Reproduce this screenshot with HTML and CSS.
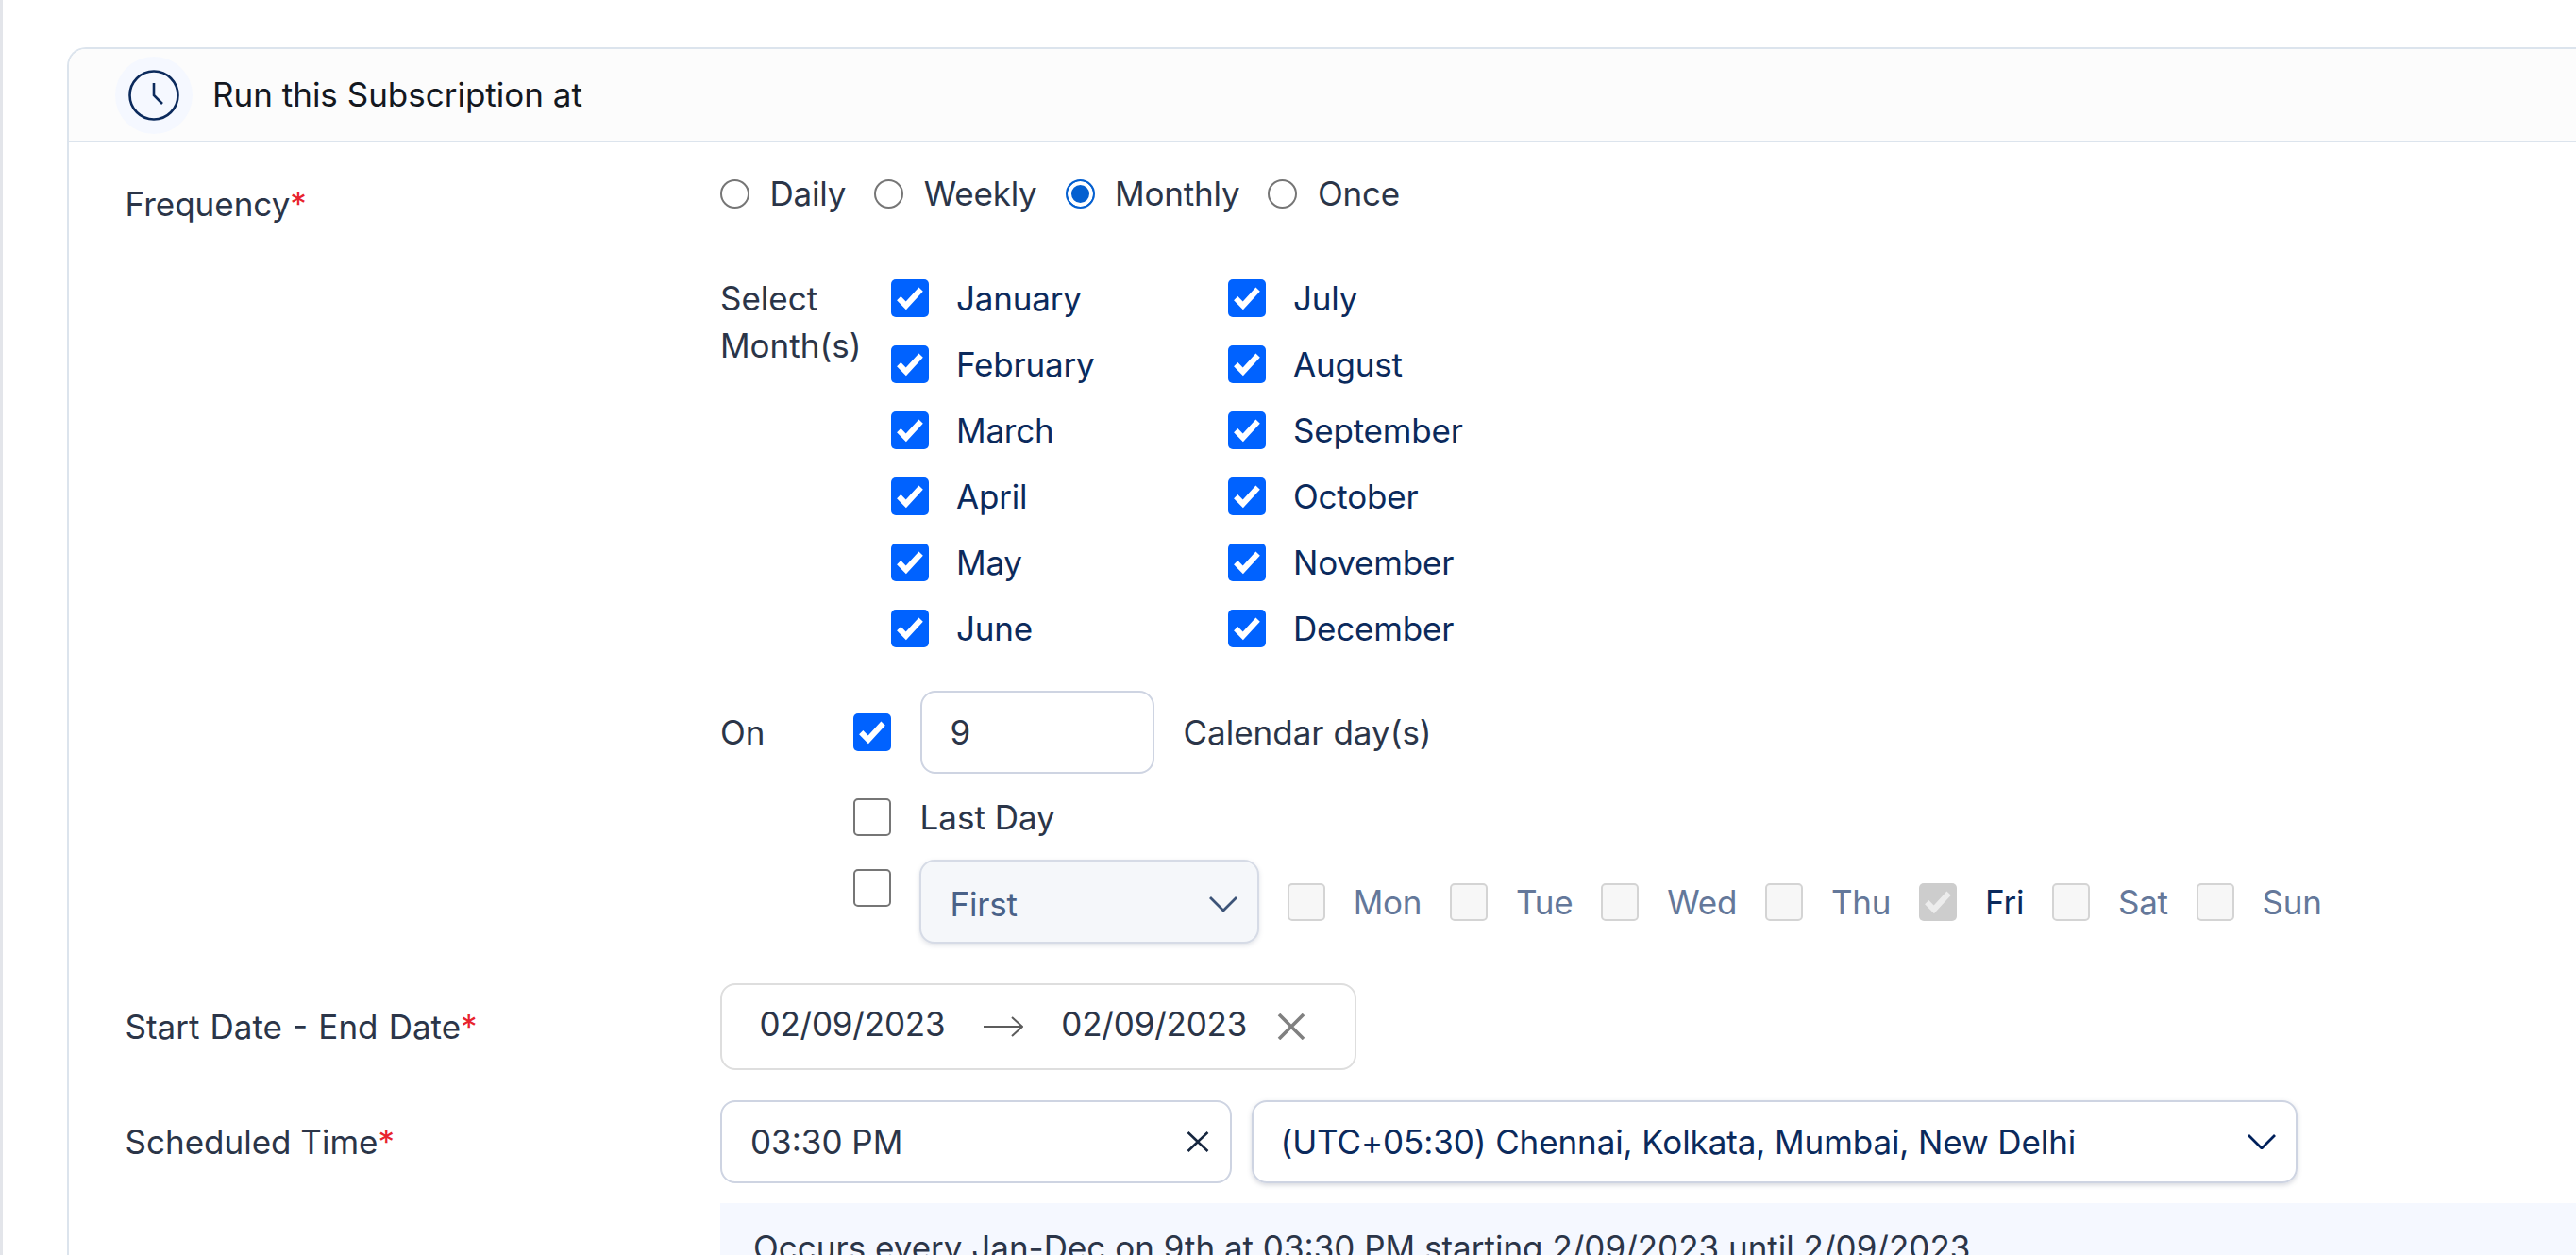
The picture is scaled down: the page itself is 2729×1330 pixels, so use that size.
FILE: index.html
```html
<!DOCTYPE html>
<html lang="en">
<head>
<meta charset="utf-8">
<title>Run this Subscription at</title>
<link rel="stylesheet" href="styles.css">
</head>
<body>
<svg class="defs" width="0" height="0" aria-hidden="true">
  <symbol id="tick" viewBox="0 0 40 40"><path d="M8.2 20.2 15.8 27.8 31.6 10.6" fill="none" stroke="currentColor" stroke-width="6"/></symbol>
</svg>
<main class="page">
  <section class="card">
    <header class="card-head">
      <span class="clock-badge">
        <svg class="clock" viewBox="0 0 54 54"><circle cx="27" cy="27" r="25.5" fill="none" stroke="#0b2a5c" stroke-width="2.6"/><path d="M27 14V27L36 36" fill="none" stroke="#0b2a5c" stroke-width="2.6"/></svg>
      </span>
      <h2 class="card-title">Run this Subscription at</h2>
    </header>
    <div class="card-body">
      <div class="form-row">
        <div class="label label-freq">Frequency<span class="req">*</span></div>
        <div class="field">
          <div class="radios">
            <label class="radio-item"><span class="radio"></span>Daily</label>
            <label class="radio-item"><span class="radio"></span>Weekly</label>
            <label class="radio-item"><span class="radio on"></span>Monthly</label>
            <label class="radio-item"><span class="radio"></span>Once</label>
          </div>
          <div class="months-block">
            <div class="months-label">Select Month(s)</div>
            <div class="months">
              <label class="month"><span class="check on"><svg><use href="#tick"/></svg></span>January</label>
              <label class="month"><span class="check on"><svg><use href="#tick"/></svg></span>July</label>
              <label class="month"><span class="check on"><svg><use href="#tick"/></svg></span>February</label>
              <label class="month"><span class="check on"><svg><use href="#tick"/></svg></span>August</label>
              <label class="month"><span class="check on"><svg><use href="#tick"/></svg></span>March</label>
              <label class="month"><span class="check on"><svg><use href="#tick"/></svg></span>September</label>
              <label class="month"><span class="check on"><svg><use href="#tick"/></svg></span>April</label>
              <label class="month"><span class="check on"><svg><use href="#tick"/></svg></span>October</label>
              <label class="month"><span class="check on"><svg><use href="#tick"/></svg></span>May</label>
              <label class="month"><span class="check on"><svg><use href="#tick"/></svg></span>November</label>
              <label class="month"><span class="check on"><svg><use href="#tick"/></svg></span>June</label>
              <label class="month"><span class="check on"><svg><use href="#tick"/></svg></span>December</label>
            </div>
          </div>
          <div class="on-row">
            <span class="on-label">On</span>
            <span class="check on"><svg><use href="#tick"/></svg></span>
            <div class="num-input">9</div>
            <span>Calendar day(s)</span>
          </div>
          <div class="last-row">
            <span class="check"></span>
            <span>Last Day</span>
          </div>
          <div class="week-row">
            <span class="check check-top"></span>
            <div class="select-first">First
              <svg class="chev" viewBox="0 0 30 16"><path d="M1 1 15 15 29 1" fill="none" stroke="#3d5478" stroke-width="2.8"/></svg>
            </div>
            <label class="day"><span class="check off"></span>Mon</label>
            <label class="day"><span class="check off"></span>Tue</label>
            <label class="day"><span class="check off"></span>Wed</label>
            <label class="day"><span class="check off"></span>Thu</label>
            <label class="day day-on"><span class="check off-on"><svg><use href="#tick"/></svg></span>Fri</label>
            <label class="day"><span class="check off"></span>Sat</label>
            <label class="day"><span class="check off"></span>Sun</label>
          </div>
        </div>
      </div>
      <div class="form-row row-date">
        <div class="label label-date">Start Date - End Date<span class="req">*</span></div>
        <div class="date-box">
          <span class="date">02/09/2023</span>
          <svg class="arrow" viewBox="0 0 42 22"><path d="M0 11H41M30 1 41 11 30 21" fill="none" stroke="#5c5c5c" stroke-width="2"/></svg>
          <span class="date">02/09/2023</span>
          <svg class="date-x" viewBox="0 0 30 28"><path d="M2 1 28 27M28 1 2 27" fill="none" stroke="#808080" stroke-width="3.6"/></svg>
        </div>
      </div>
      <div class="form-row row-time">
        <div class="label">Scheduled Time<span class="req">*</span></div>
        <div class="time-fields">
          <div class="time-box">03:30 PM
            <svg class="time-x" viewBox="0 0 24 22"><path d="M1.5 1 22.5 21M22.5 1 1.5 21" fill="none" stroke="#16263f" stroke-width="2.6"/></svg>
          </div>
          <div class="tz-box">(UTC+05:30) Chennai, Kolkata, Mumbai, New Delhi
            <svg class="chev" viewBox="0 0 30 16"><path d="M1 1 15 15 29 1" fill="none" stroke="#00205b" stroke-width="2.8"/></svg>
          </div>
        </div>
      </div>
      <div class="info-row">
        <div class="info">Occurs every Jan-Dec on 9th at 03:30 PM starting 2/09/2023 until 2/09/2023</div>
      </div>
    </div>
  </section>
</main>
</body>
</html>
```

FILE: styles.css
```css
* { box-sizing: border-box; }
html, body { margin: 0; height: 100%; overflow: hidden; background: #fff; }
body { font-family: Inter, "Noto Sans", sans-serif; font-size: 35px; line-height: 50px; color: #2b3548; }
.defs { position: absolute; }
.page { height: 1330px; overflow: hidden; padding: 50px 0 0 68px; border-left: 3px solid #e3e5ea; }
.card { border: 2.5px solid #dce4ed; border-right: 0; border-bottom: 0; border-radius: 20px 0 0 0; height: 1400px; }
.card-head { height: 99px; background: #fcfcfc; border-bottom: 2.5px solid #dce4ed; border-radius: 18px 0 0 0; display: flex; align-items: center; padding-left: 49px; gap: 21px; }
.clock-badge { width: 82px; height: 82px; border-radius: 50%; background: #f5f8ff; display: flex; align-items: center; justify-content: center; }
.clock { width: 54px; height: 54px; }
.card-title { margin: -1px 0 0; font-size: 35px; font-weight: 400; color: #14181f; }
.card-body { padding: 29px 0 0 59.5px; }
.form-row { display: grid; grid-template-columns: 630.5px 1fr; }
.label { color: #2b3548; }
.label-freq { padding-top: 11px; }
.label-date { word-spacing: 1.3px; }
.req { color: #e8232d; }
.radios { display: flex; gap: 30px; letter-spacing: -.2px; }
.radio-item { display: flex; align-items: center; gap: 21.5px; }
.radio { width: 31px; height: 31px; border-radius: 50%; border: 2.5px solid #767676; background: #fff; }
.radio.on { border-color: #0560d0; background: #0560d0; box-shadow: inset 0 0 0 4px #fff; }
.months-block { display: flex; margin-top: 61px; }
.months-label { width: 180.5px; }
.months { display: grid; grid-template-columns: 357px 1fr; row-gap: 20px; color: #0b2a5c; letter-spacing: -.2px; }
.month { display: flex; align-items: center; gap: 29.5px; }
.check { flex: none; width: 40px; height: 40px; border-radius: 5px; border: 2.5px solid #767676; background: #fff; display: block; }
.check svg { display: block; width: 100%; height: 100%; color: #fff; }
.check.on { background: #0062ff; border: 0; }
.check.off { background: #f7f7f7; border-color: #d4d4d4; }
.check.off-on { background: #cdcdcd; border: 0; }
.check.off-on svg { color: #ececec; }
.on-row { display: flex; align-items: center; margin-top: 41px; }
.on-label { width: 140.5px; }
.num-input { width: 248px; height: 88px; margin: 0 31px; padding-left: 30px; border: 2.5px solid #ced4e2; border-radius: 16px; display: flex; align-items: center; }
.last-row { display: flex; align-items: center; gap: 31px; margin-top: 21px; padding-left: 140.5px; }
.week-row { display: flex; align-items: center; gap: 29.7px; margin-top: 20px; padding-left: 140.5px; letter-spacing: -.2px; }
.check-top { align-self: flex-start; margin: 10px 1.3px 0 0; }
.select-first { width: 359.5px; height: 89px; padding: 5px 21px 0 30px; background: #f5f7fa; border: 2.5px solid #d6dbe6; border-radius: 16px; box-shadow: 0 2px 5px rgba(90, 100, 125, .18); color: #4a6288; display: flex; align-items: center; justify-content: space-between; }
.chev { width: 30px; height: 16px; flex: none; }
.day { display: flex; align-items: center; gap: 30px; color: #64789a; }
.day-on { color: #0b2a5c; }
.row-date { margin-top: 42px; }
.row-date .label { align-self: center; }
.date-box { width: 674px; height: 92px; padding-left: 39.5px; border: 2.5px solid #dedede; border-radius: 16px; display: flex; align-items: center; }
.date { margin-top: -6px; letter-spacing: -.2px; }
.arrow { width: 42px; height: 22px; margin: 0 40px 0 41px; flex: none; }
.date-x { width: 30px; height: 28px; margin-left: 32px; flex: none; }
.row-time { margin-top: 32px; }
.row-time .label { align-self: center; }
.time-fields { display: flex; gap: 21px; }
.time-box { width: 541.5px; height: 88px; padding: 0 22px 0 30px; border: 2.5px solid #ced4e2; border-radius: 16px; display: flex; align-items: center; justify-content: space-between; }
.time-x { width: 24px; height: 22px; flex: none; }
.tz-box { width: 1108px; height: 88px; padding: 0 21px 0 29px; border: 2.5px solid #ced4e2; border-radius: 16px; box-shadow: 0 2px 5px rgba(90, 100, 125, .25); color: #0b2a5c; letter-spacing: -.1px; display: flex; align-items: center; justify-content: space-between; }
.info-row { padding: 21px 0 0 630.5px; }
.info { background: #f5f8ff; padding: 22px 35px; height: 120px; color: #2b3548; }
```
